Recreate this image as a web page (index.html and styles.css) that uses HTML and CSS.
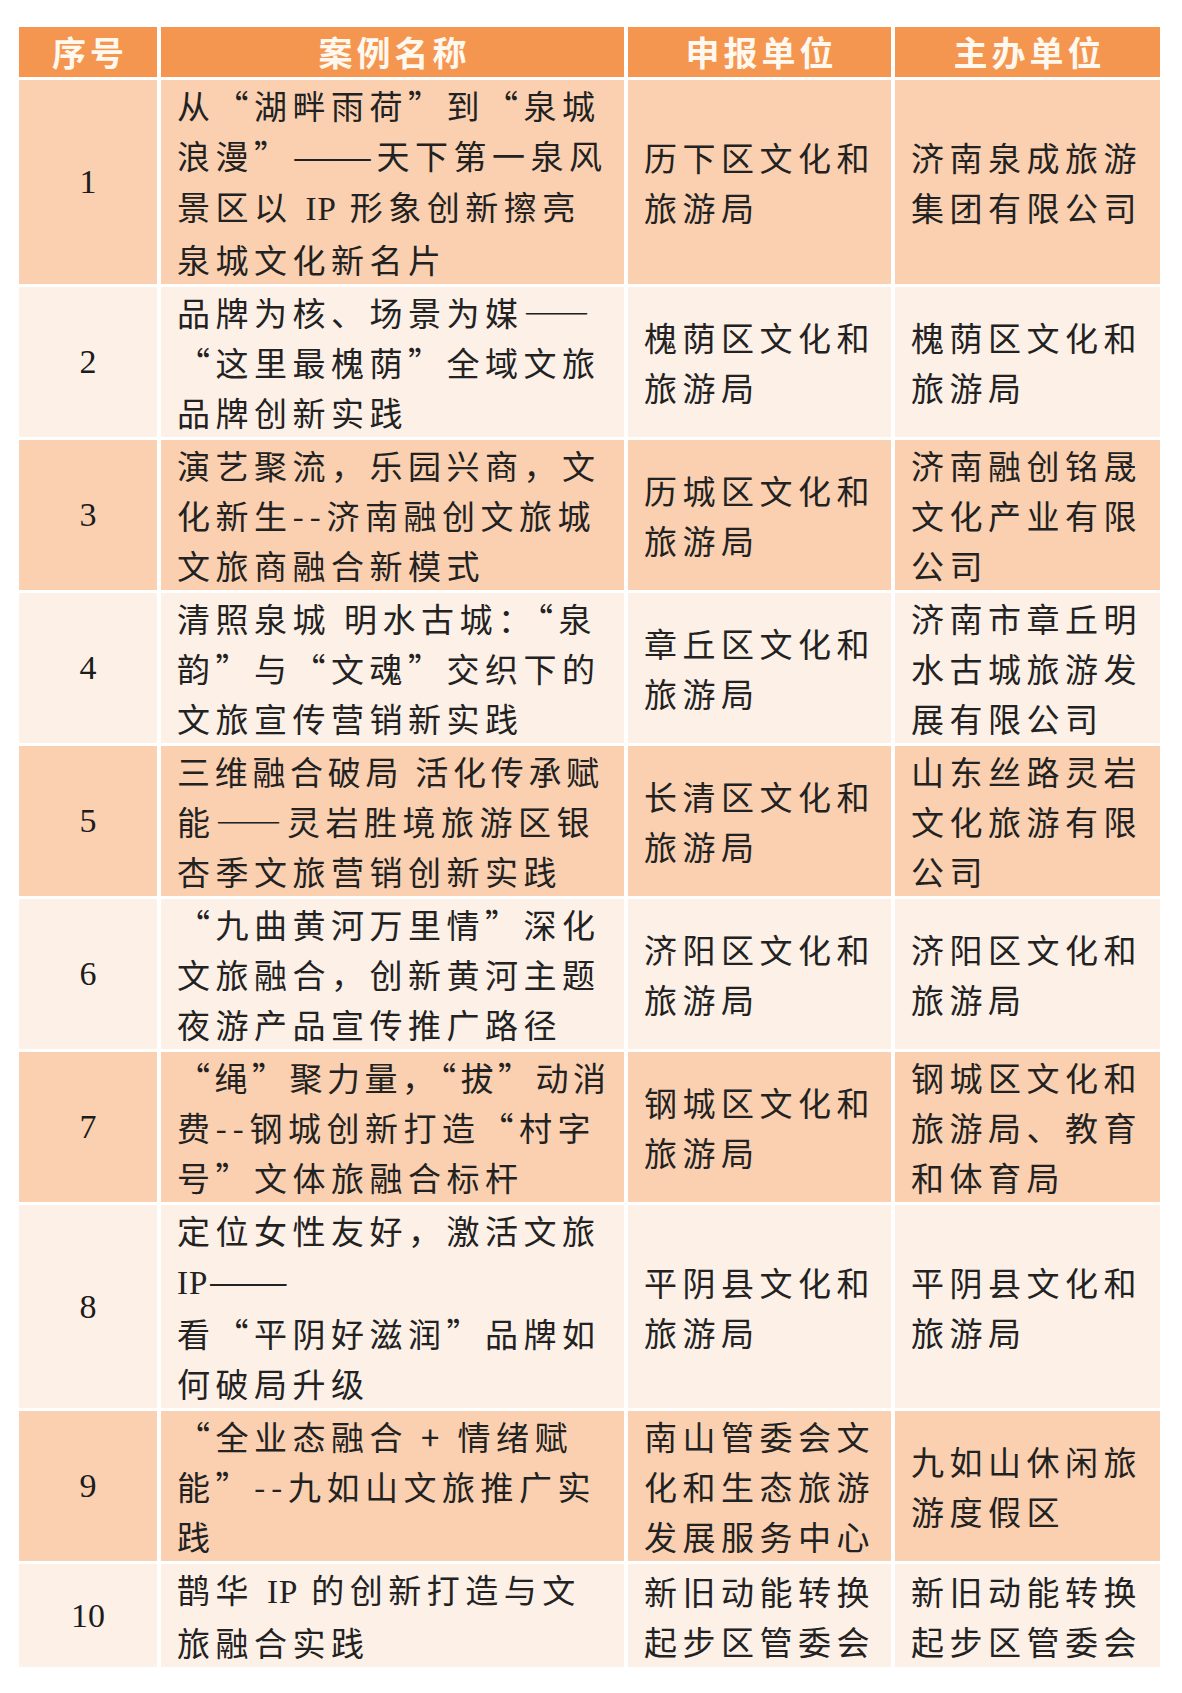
FILE: index.html
```html
<!DOCTYPE html>
<html lang="zh-CN">
<head>
<meta charset="utf-8">
<title>案例名单</title>
<link rel="stylesheet" href="styles.css">
</head>
<body>
<table class="cases">
  <colgroup>
    <col class="c-no"><col class="c-name"><col class="c-unit"><col class="c-host">
  </colgroup>
  <thead>
    <tr class="head">
      <th>序号</th><th>案例名称</th><th>申报单位</th><th>主办单位</th>
    </tr>
  </thead>
  <tbody>
    <tr class="odd">
      <td class="no">1</td>
      <td class="txt">从“湖畔雨荷”到“泉城<br>浪漫”<span class="dash">——</span>天下第一泉风<br>景区以 <span class="lat">IP</span> 形象创新擦亮<br>泉城文化新名片</td>
      <td class="txt">历下区文化和<br>旅游局</td>
      <td class="txt">济南泉成旅游<br>集团有限公司</td>
    </tr>
    <tr class="even">
      <td class="no">2</td>
      <td class="txt">品牌为核、场景为媒——<br>“这里最槐荫”全域文旅<br>品牌创新实践</td>
      <td class="txt">槐荫区文化和<br>旅游局</td>
      <td class="txt">槐荫区文化和<br>旅游局</td>
    </tr>
    <tr class="odd">
      <td class="no">3</td>
      <td class="txt">演艺聚流，乐园兴商，文<br>化新生--济南融创文旅城<br>文旅商融合新模式</td>
      <td class="txt">历城区文化和<br>旅游局</td>
      <td class="txt">济南融创铭晟<br>文化产业有限<br>公司</td>
    </tr>
    <tr class="even">
      <td class="no">4</td>
      <td class="txt">清照泉城 明水古城：“泉<br>韵”与“文魂”交织下的<br>文旅宣传营销新实践</td>
      <td class="txt">章丘区文化和<br>旅游局</td>
      <td class="txt">济南市章丘明<br>水古城旅游发<br>展有限公司</td>
    </tr>
    <tr class="odd">
      <td class="no">5</td>
      <td class="txt"><span class="tight">三维融合破局 活化传承赋</span><br>能——灵岩胜境旅游区银<br>杏季文旅营销创新实践</td>
      <td class="txt">长清区文化和<br>旅游局</td>
      <td class="txt">山东丝路灵岩<br>文化旅游有限<br>公司</td>
    </tr>
    <tr class="even">
      <td class="no">6</td>
      <td class="txt">“九曲黄河万里情”深化<br>文旅融合，创新黄河主题<br>夜游产品宣传推广路径</td>
      <td class="txt">济阳区文化和<br>旅游局</td>
      <td class="txt">济阳区文化和<br>旅游局</td>
    </tr>
    <tr class="odd">
      <td class="no">7</td>
      <td class="txt"><span class="tighter">“绳”聚力量，“拔”动消</span><br>费--钢城创新打造“村字<br>号”文体旅融合标杆</td>
      <td class="txt">钢城区文化和<br>旅游局</td>
      <td class="txt">钢城区文化和<br>旅游局、教育<br>和体育局</td>
    </tr>
    <tr class="even">
      <td class="no">8</td>
      <td class="txt">定位女性友好，激活文旅<br><span class="lat">IP</span><span class="dash">——</span><br>看“平阴好滋润”品牌如<br>何破局升级</td>
      <td class="txt">平阴县文化和<br>旅游局</td>
      <td class="txt">平阴县文化和<br>旅游局</td>
    </tr>
    <tr class="odd">
      <td class="no">9</td>
      <td class="txt">“全业态融合 + 情绪赋<br>能”--九如山文旅推广实<br>践</td>
      <td class="txt">南山管委会文<br>化和生态旅游<br>发展服务中心</td>
      <td class="txt">九如山休闲旅<br>游度假区</td>
    </tr>
    <tr class="even">
      <td class="no">10</td>
      <td class="txt">鹊华 <span class="lat">IP</span> 的创新打造与文<br>旅融合实践</td>
      <td class="txt">新旧动能转换<br>起步区管委会</td>
      <td class="txt">新旧动能转换<br>起步区管委会</td>
    </tr>
  </tbody>
</table>
</body>
</html>
```

FILE: styles.css
```css
html, body {
  margin: 0;
  padding: 0;
  background: #ffffff;
}

body {
  padding: 24px 0 0 15px;
  font-family: "Noto Sans CJK SC", "Noto Sans", sans-serif;
  color: #222222;
}

.cases {
  border-collapse: separate;
  border-spacing: 4px 3px;
  table-layout: fixed;
  width: 1149px;
}

.c-no { width: 138px; }
.c-name { width: 463px; }
.c-unit { width: 263px; }
.c-host { width: 265px; }

.head th {
  background: #f4964f;
  color: #fff8ef;
  font-weight: 700;
  font-size: 34px;
  line-height: 50px;
  height: 50px;
  padding: 0 0 0 4px;
  letter-spacing: 4px;
  text-align: center;
  vertical-align: middle;
}

.odd td { background: #fad0b0; }
.even td { background: #fdf0e7; }

td {
  padding: 0;
  vertical-align: middle;
}

.no {
  font-family: "Liberation Serif", "Times New Roman", serif;
  font-size: 34px;
  line-height: 50px;
  text-align: center;
  color: #1c1c1c;
}

.txt {
  font-size: 33px;
  line-height: 50px;
  letter-spacing: 5.5px;
  padding: 0 4px 0 16px;
  white-space: nowrap;
  overflow: hidden;
  color: #222222;
}

.tight {
  letter-spacing: 4.7px;
}

.tighter {
  letter-spacing: 4.5px;
}

.dash {
  font-family: "Liberation Serif", "Times New Roman", serif;
  font-size: 38px;
  letter-spacing: 0;
  margin: 0 6px 0 2px;
}

.lat {
  font-family: "Liberation Serif", "Times New Roman", serif;
  letter-spacing: 1px;
}
```
